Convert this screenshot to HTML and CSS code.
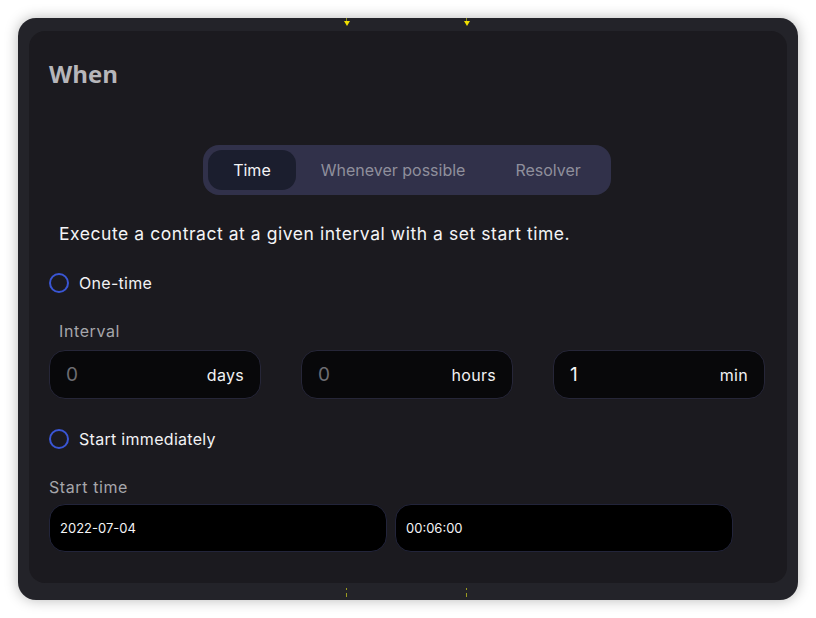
FILE: index.html
```html
<!DOCTYPE html>
<html>
<head>
<meta charset="utf-8">
<link rel="stylesheet" href="styles.css">
</head>
<body>
<div class="frame">
  <span class="marker marker-top m1"></span>
  <span class="marker marker-top m2"></span>
  <span class="marker marker-bottom m1"></span>
  <span class="marker marker-bottom m2"></span>
  <div class="panel">
    <h2 class="title">When</h2>
    <div class="tabs-wrap">
      <div class="tabs">
        <div class="tab active">Time</div>
        <div class="tab">Whenever possible</div>
        <div class="tab">Resolver</div>
      </div>
    </div>
    <p class="desc">Execute a contract at a given interval with a set start time.</p>
    <label class="radio-row r1"><span class="radio"></span><span>One-time</span></label>
    <div class="label indent">Interval</div>
    <div class="interval">
      <div class="field"><span class="val placeholder">0</span><span class="unit">days</span></div>
      <div class="field"><span class="val placeholder">0</span><span class="unit">hours</span></div>
      <div class="field"><span class="val">1</span><span class="unit">min</span></div>
    </div>
    <label class="radio-row r2"><span class="radio"></span><span>Start immediately</span></label>
    <div class="label start-label">Start time</div>
    <div class="dates">
      <div class="date">2022-07-04</div>
      <div class="date">00:06:00</div>
    </div>
  </div>
</div>
</body>
</html>
```

FILE: styles.css
```css
* { box-sizing: border-box; }
html, body { margin: 0; padding: 0; background: #ffffff; }
body {
  width: 816px;
  height: 618px;
  font-family: "Inter", "Noto Sans", sans-serif;
  padding-top: 18px;
  padding-left: 18px;
}
.frame {
  position: relative;
  width: 780px;
  height: 582px;
  background: #232329;
  border-radius: 18px;
  box-shadow: 0 0 14px rgba(0,0,0,0.28);
  padding: 13px 11px 17px 11px;
}
.marker { position: absolute; width: 3px; }
.m1 { left: 327px; }
.m2 { left: 447px; }
.marker-top { top: 0; height: 8px; }
.marker-top::before {
  content: ""; position: absolute; left: 1px; top: 0; width: 1px; height: 3px; background: #8a8a20;
}
.marker-top::after {
  content: ""; position: absolute; left: -1px; top: 3px;
  border-left: 3px solid transparent; border-right: 3px solid transparent; border-top: 5px solid #f0e000;
}
.marker-bottom {
  top: 570px; height: 10px;
}
.marker-bottom::before {
  content: ""; position: absolute; left: 1px; top: 0; width: 1px; height: 2px; background: #9a9a20;
}
.marker-bottom::after {
  content: ""; position: absolute; left: 1px; top: 5px; width: 1px; height: 4px; background: #9a9a20;
}
.panel {
  height: 100%;
  background: #1b1a1f;
  border-radius: 16px;
  padding: 0 22px 0 20px;
  display: flex;
  flex-direction: column;
  color: #f2f2f4;
}
.title {
  margin: 28px 0 0 0;
  font-family: "Open Sans", "Noto Sans", sans-serif;
  font-weight: 700;
  font-size: 24px;
  line-height: 30px;
  color: #b6b6ba;
}
.tabs-wrap { display: flex; justify-content: center; margin-top: 56px; }
.tabs {
  display: flex;
  background: #31314a;
  border-radius: 16px;
  padding: 5px;
  height: 50px;
}
.tab {
  padding: 0 25px;
  height: 40px;
  display: flex;
  align-items: center;
  font-size: 16px;
  color: #8f8f9c;
  border-radius: 14px;
}
.tab.active { background: #1b1e2e; color: #f4f4f6; }
.desc {
  margin: 27px 0 0 10px;
  font-size: 17.5px;
  line-height: 24px;
  letter-spacing: 0.55px;
  color: #f4f4f6;
}
.radio-row {
  display: flex;
  align-items: center;
  gap: 10px;
  font-size: 16px;
  line-height: 24px;
  letter-spacing: 0.3px;
  color: #f2f2f4;
}
.r1 { margin-top: 25px; }
.r2 { margin-top: 28px; }
.radio {
  width: 20px; height: 20px;
  border: 2px solid #3a56d4;
  border-radius: 50%;
}
.label {
  font-size: 16px;
  line-height: 20px;
  letter-spacing: 0.6px;
  color: #a6a6ab;
}
.indent { margin: 26px 0 0 10px; }
.interval {
  display: flex;
  gap: 40px;
  margin-top: 9px;
}
.field {
  width: 212px;
  height: 49px;
  background: #08080a;
  border: 1px solid #262638;
  border-radius: 16px;
  display: flex;
  align-items: center;
  justify-content: space-between;
  padding: 0 16px 0 16px;
}
.val { font-size: 19px; color: #f4f4f6; }
.val.placeholder { color: #6d6d72; }
.unit { font-size: 16px; letter-spacing: 0.3px; color: #f2f2f4; }
.field.last { padding-right: 19px; }
.start-label { margin-top: 26px; }
.dates { display: flex; gap: 8px; margin-top: 7px; }
.date {
  width: 338px;
  height: 48px;
  background: #000000;
  border: 1px solid #22243a;
  border-radius: 16px;
  display: flex;
  align-items: center;
  padding-left: 10px;
  font-size: 13px;
  color: #f4f4f6;
}
```
